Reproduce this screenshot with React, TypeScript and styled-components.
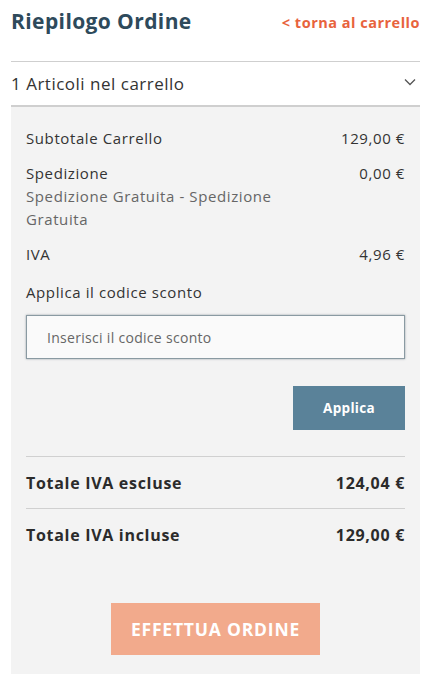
import styled, { createGlobalStyle } from 'styled-components'

const GlobalStyle = createGlobalStyle`
  body {
    margin: 0;
    background: #fff;
    font-family: "Open Sans", Lato, sans-serif;
    color: #333;
  }
`

export default function App() {
  return (
    <>
      <GlobalStyle />
      <Page>
        <Header>
          <Title>Riepilogo Ordine</Title>
          <BackLink href="#">&lt; torna al carrello</BackLink>
        </Header>
        <ItemsToggle>
          <span>1 Articoli nel carrello</span>
          <svg width="12" height="8" viewBox="0 0 12 8" fill="none">
            <path d="M1 1.5l5 5 5-5" stroke="#555" strokeWidth="1.3" />
          </svg>
        </ItemsToggle>
        <Summary>
          <Row>
            <span>Subtotale Carrello</span>
            <span>129,00 €</span>
          </Row>
          <Row>
            <Label>
              Spedizione
              <Muted>Spedizione Gratuita - Spedizione Gratuita</Muted>
            </Label>
            <span>0,00 €</span>
          </Row>
          <Row>
            <span>IVA</span>
            <span>4,96 €</span>
          </Row>
          <CouponLabel>Applica il codice sconto</CouponLabel>
          <CouponInput placeholder="Inserisci il codice sconto" />
          <Actions>
            <ApplyButton>Applica</ApplyButton>
          </Actions>
          <Totals>
            <TotalRow>
              <span>Totale IVA escluse</span>
              <span>124,04 €</span>
            </TotalRow>
            <TotalRow>
              <span>Totale IVA incluse</span>
              <span>129,00 €</span>
            </TotalRow>
          </Totals>
          <OrderButton>EFFETTUA ORDINE</OrderButton>
        </Summary>
      </Page>
    </>
  )
}

const Page = styled.div`
  width: 409px;
  margin-left: 11px;
`

const Header = styled.div`
  display: flex;
  align-items: center;
  justify-content: space-between;
  height: 42px;
  margin-bottom: 19px;
`

const Title = styled.h1`
  margin: 0;
  font-size: 21px;
  font-weight: 700;
  letter-spacing: 0.4px;
  color: #2e4a5b;
`

const BackLink = styled.a`
  font-size: 14.5px;
  font-weight: 700;
  letter-spacing: 0.5px;
  color: #e8633d;
  text-decoration: none;
  margin-top: 2px;
`

const ItemsToggle = styled.div`
  display: flex;
  align-items: center;
  justify-content: space-between;
  height: 43px;
  border-top: 1px solid #cfcfcf;
  border-bottom: 2px solid #cfcfcf;
  font-size: 17px;
  letter-spacing: 0.5px;
  color: #333;
  padding-right: 4px;
  svg { margin-top: -4px; }
`

const Summary = styled.div`
  background: #f3f3f3;
  padding: 20px 15px 19px;
  font-size: 15px;
  letter-spacing: 0.6px;
  display: flex;
  flex-direction: column;
`

const Row = styled.div`
  display: flex;
  justify-content: space-between;
  align-items: flex-start;
  line-height: 23px;
  margin-bottom: 12px;
`

const Label = styled.div`
  display: flex;
  flex-direction: column;
`

const Muted = styled.span`
  color: #666;
  max-width: 275px;
`

const CouponLabel = styled.div`
  line-height: 23px;
  margin-top: 3px;
  margin-bottom: 11px;
`

const CouponInput = styled.input`
  height: 44px;
  box-sizing: border-box;
  border: 1px solid #8a9aa2;
  box-shadow: 0 0 2px rgba(60, 80, 90, 0.5);
  background: #fafafa;
  padding: 0 20px;
  font-family: inherit;
  font-size: 14px;
  letter-spacing: 0.3px;
  color: #333;
  outline: none;
  &::placeholder { color: #666; }
`

const Actions = styled.div`
  display: flex;
  justify-content: flex-end;
  margin-top: 27px;
  padding-bottom: 26px;
  border-bottom: 1px solid #d0d0d0;
`

const ApplyButton = styled.button`
  width: 112px;
  height: 44px;
  border: none;
  background: #5a8299;
  color: #fff;
  font-family: inherit;
  font-weight: 700;
  font-size: 13.5px;
  letter-spacing: 0.3px;
`

const Totals = styled.div`
  display: flex;
  flex-direction: column;
`

const TotalRow = styled.div`
  display: flex;
  justify-content: space-between;
  align-items: center;
  height: 51px;
  font-size: 16px;
  font-weight: 700;
  letter-spacing: 0.7px;
  color: #2b2b2b;
  & + & { border-top: 1px solid #d0d0d0; height: 52px; }
`

const OrderButton = styled.button`
  align-self: center;
  margin-top: 42px;
  width: 209px;
  height: 52px;
  border: none;
  background: #f2aa8c;
  color: #fff;
  font-family: inherit;
  font-weight: 700;
  font-size: 17.5px;
  letter-spacing: 0.8px;
`
